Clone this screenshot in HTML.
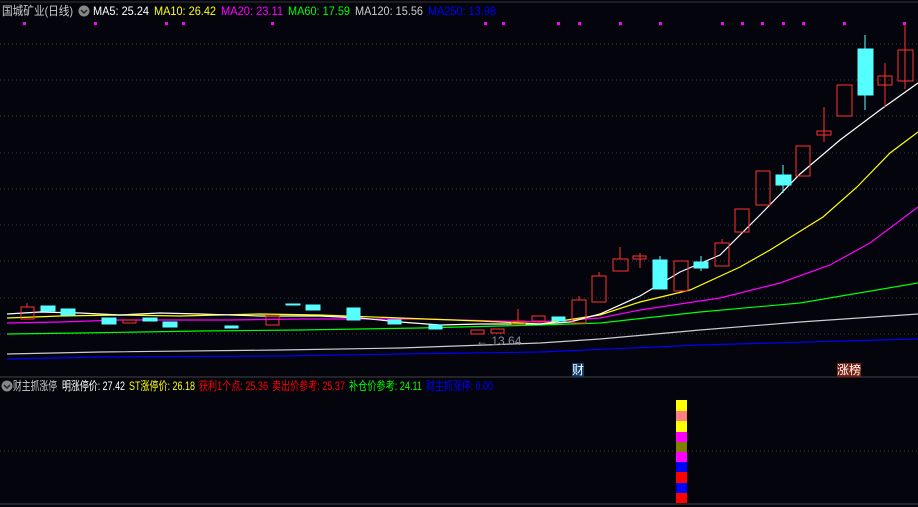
<!DOCTYPE html><html><head><meta charset="utf-8"><style>
body{margin:0;width:918px;height:507px;background:#04040c;overflow:hidden;font-family:"Liberation Sans","Noto Sans CJK SC",sans-serif;position:relative}
.t{position:absolute;font-size:12px;white-space:nowrap;line-height:14px;transform-origin:0 50%}
</style></head><body>
<svg width="918" height="507" style="position:absolute;left:0;top:0">
<g stroke="#3a3a40" stroke-dasharray="1,3">
<line x1="0" y1="44" x2="918" y2="44"/><line x1="0" y1="80" x2="918" y2="80"/><line x1="0" y1="116" x2="918" y2="116"/><line x1="0" y1="153" x2="918" y2="153"/><line x1="0" y1="189" x2="918" y2="189"/><line x1="0" y1="225" x2="918" y2="225"/><line x1="0" y1="261" x2="918" y2="261"/><line x1="0" y1="298" x2="918" y2="298"/><line x1="0" y1="334" x2="918" y2="334"/><line x1="0" y1="451" x2="918" y2="451"/>
</g>
<line x1="0" y1="2" x2="918" y2="2" stroke="#333"/>
<line x1="0" y1="377" x2="918" y2="377" stroke="#444"/>
<line x1="0" y1="504" x2="918" y2="504" stroke="#444"/>
<g fill="#f0f">
<rect x="23" y="22" width="3" height="3"/><rect x="94" y="22" width="3" height="3"/><rect x="165" y="22" width="3" height="3"/><rect x="182" y="22" width="3" height="3"/><rect x="271" y="22" width="3" height="3"/><rect x="484" y="22" width="3" height="3"/><rect x="502" y="22" width="3" height="3"/><rect x="557" y="22" width="3" height="3"/><rect x="578" y="22" width="3" height="3"/><rect x="619" y="22" width="3" height="3"/><rect x="659" y="22" width="3" height="3"/><rect x="721" y="22" width="3" height="3"/><rect x="741" y="22" width="3" height="3"/><rect x="761" y="22" width="3" height="3"/><rect x="782" y="22" width="3" height="3"/><rect x="802" y="22" width="3" height="3"/><rect x="843" y="22" width="3" height="3"/><rect x="903" y="22" width="3" height="3"/>
</g>
<g fill="none" stroke-width="1.2">
<polyline stroke="#00f" points="7,359 100,357 280,356 400,354 540,352 700,345 918,339"/>
<polyline stroke="#ccc" points="7,354 100,352 280,350 400,348 540,343 600,339 700,330 800,322 918,314"/>
<polyline stroke="#0f0" points="7,334 80,333 200,331 300,330 420,328 540,325 600,323 700,312 800,303 918,283"/>
<polyline stroke="#f0f" points="7,323 60,322 120,320 230,320 300,319 420,319 540,322 600,318 640,310 720,298 780,283 830,265 870,243 918,207"/>
<polyline stroke="#ff0" points="7,318 60,316 120,315 180,316 260,314 320,315 400,318 480,321 540,324 600,315 640,302 690,290 740,267 770,250 823,217 857,187 890,153 918,132"/>
<polyline stroke="#fff" points="7,314 40,312 80,313 120,315 160,313 200,314 260,316 320,316 360,318 400,322 440,325 480,324 540,324 570,322 600,314 640,296 680,272 720,255 760,215 800,174 840,140 880,110 918,83"/>
</g>
<g stroke="#ff3030" fill="none">
<rect x="21" y="307" width="13" height="12"/><line x1="27" y1="303" x2="27" y2="307"/>
<rect x="123" y="320" width="13" height="3"/><rect x="266" y="316" width="13" height="9"/><rect x="471" y="330" width="13" height="4"/><rect x="491" y="329" width="13" height="4"/>
<rect x="512" y="321" width="13" height="3"/><line x1="518" y1="309" x2="518" y2="321"/><rect x="532" y="316" width="13" height="5"/>
<rect x="572" y="300" width="14" height="23"/><line x1="579" y1="296" x2="579" y2="300"/>
<rect x="592" y="276" width="14" height="26"/><line x1="599" y1="272" x2="599" y2="276"/>
<rect x="613" y="259" width="15" height="12"/><line x1="620" y1="247" x2="620" y2="259"/>
<rect x="633" y="256" width="13" height="3"/><line x1="640" y1="253" x2="640" y2="268"/>
<rect x="674" y="261" width="14" height="30"/>
<rect x="715" y="243" width="14" height="23"/><line x1="722" y1="239" x2="722" y2="243"/>
<rect x="735" y="209" width="14" height="23"/>
<rect x="756" y="171" width="14" height="34"/>
<rect x="796" y="146" width="14" height="30"/>
<rect x="817" y="131" width="14" height="4"/><line x1="824" y1="107" x2="824" y2="142"/>
<rect x="837" y="85" width="15" height="31"/>
<rect x="878" y="76" width="14" height="9"/><line x1="885" y1="63" x2="885" y2="107"/>
<rect x="898" y="50" width="15" height="31"/><line x1="905" y1="24" x2="905" y2="89"/>
</g>
<g fill="#55ffff" stroke="#55ffff">
<rect x="41" y="306" width="14" height="5"/><rect x="61" y="309" width="14" height="6"/><rect x="102" y="318" width="14" height="6"/><rect x="143" y="318" width="14" height="3"/><rect x="163" y="322" width="14" height="5"/><rect x="225" y="326" width="13" height="2"/><rect x="286" y="304" width="14" height="1"/><rect x="306" y="305" width="14" height="5"/><rect x="347" y="308" width="13" height="12"/><rect x="388" y="320" width="13" height="4"/><rect x="429" y="325" width="13" height="4"/><rect x="552" y="317" width="13" height="4"/>
<rect x="653" y="260" width="14" height="29"/><line x1="660" y1="256" x2="660" y2="260"/>
<rect x="694" y="262" width="14" height="6"/><line x1="701" y1="256" x2="701" y2="271"/>
<rect x="776" y="175" width="15" height="10"/><line x1="783" y1="165" x2="783" y2="193"/>
<rect x="858" y="49" width="15" height="46"/><line x1="865" y1="35" x2="865" y2="110"/>
</g>
<rect x="676" y="400" width="11" height="11" fill="#ff0"/><rect x="676" y="411" width="11" height="10" fill="#ff8080"/><rect x="676" y="421" width="11" height="11" fill="#ff0"/><rect x="676" y="432" width="11" height="10" fill="#f0f"/><rect x="676" y="442" width="11" height="10" fill="#808000"/><rect x="676" y="452" width="11" height="10" fill="#f0f"/><rect x="676" y="462" width="11" height="10" fill="#00f"/><rect x="676" y="472" width="11" height="11" fill="#f00"/><rect x="676" y="483" width="11" height="10" fill="#00f"/><rect x="676" y="493" width="11" height="10" fill="#f00"/>
<circle cx="84" cy="11" r="5.5" fill="#888"/><path d="M81 10l3 3 3-3" stroke="#222" fill="none" stroke-width="1.5"/>
<circle cx="7" cy="386" r="5.5" fill="#888"/><path d="M4 385l3 3 3-3" stroke="#222" fill="none" stroke-width="1.5"/>
</svg>
<div class="t" style="left:2px;top:4px;color:#ccc;--w:71">国城矿业(日线)</div>
<div class="t" style="left:93px;top:4px;color:#fff;--w:56">MA5: 25.24</div>
<div class="t" style="left:154px;top:4px;color:#ff0;--w:62">MA10: 26.42</div>
<div class="t" style="left:221px;top:4px;color:#f0f;--w:62">MA20: 23.11</div>
<div class="t" style="left:288px;top:4px;color:#0f0;--w:62">MA60: 17.59</div>
<div class="t" style="left:355px;top:4px;color:#ccc;--w:68">MA120: 15.56</div>
<div class="t" style="left:428px;top:4px;color:#00f;--w:68">MA250: 13.98</div>
<div class="t" style="left:476px;top:334px;color:#889">← 13.64</div>
<div class="t" style="left:572px;top:363px;color:#fff;background:#0a3a6a;font-size:12px">财</div>
<div class="t" style="left:837px;top:363px;color:#fff;background:#7a2010;font-size:12px">涨榜</div>
<div class="t" style="left:13px;top:379px;color:#ccc;--w:44">财主抓涨停</div>
<div class="t" style="left:62px;top:379px;color:#fff;--w:63">明涨停价: 27.42</div>
<div class="t" style="left:129px;top:379px;color:#ff0;--w:66">ST涨停价: 26.18</div>
<div class="t" style="left:199px;top:379px;color:#f00;--w:69">获利1个点: 25.36</div>
<div class="t" style="left:272px;top:379px;color:#f00;--w:73">卖出价参考: 25.37</div>
<div class="t" style="left:349px;top:379px;color:#0f0;--w:73">补仓价参考: 24.11</div>
<div class="t" style="left:426px;top:379px;color:#00f;--w:67">财主抓涨停: 0.00</div>
<script>
document.querySelectorAll('.t').forEach(function(e){var w=parseFloat(getComputedStyle(e).getPropertyValue('--w'));if(w){var r=e.getBoundingClientRect().width;e.style.transform='scaleX('+(w/r)+')';}});
</script>
</body></html>
